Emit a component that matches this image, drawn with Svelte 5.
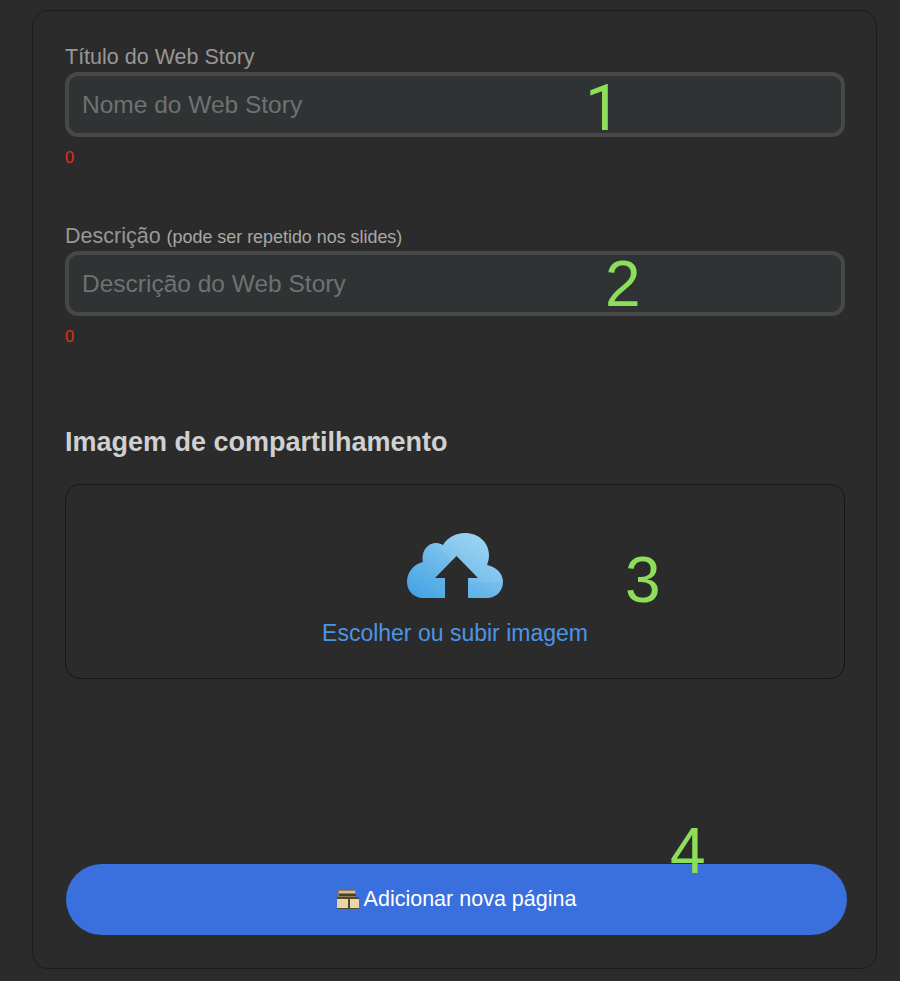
<script>
  let fields = [
    { label: 'Título do Web Story', hint: '', placeholder: 'Nome do Web Story', mark: '1' },
    { label: 'Descrição', hint: '(pode ser repetido nos slides)', placeholder: 'Descrição do Web Story', mark: '2' }
  ];
</script>

<div class="page">
  <div class="card">
    {#each fields as field, i}
      <div class="field">
        <label for={'f' + i}>{field.label}{#if field.hint}&nbsp;<small>{field.hint}</small>{/if}</label>
        <div class="inputWrap">
          <input id={'f' + i} type="text" placeholder={field.placeholder} />
          <span class="mark" class:markA={i === 0} class:markB={i === 1}>{field.mark}</span>
        </div>
        <div class="count">0</div>
      </div>
    {/each}

    <h2>Imagem de compartilhamento</h2>

    <div class="upload">
      <svg class="cloud" viewBox="0 0 96 65" width="96" height="65" aria-hidden="true">
        <defs>
          <linearGradient id="cloudFill" x1="0.1" y1="1" x2="0.9" y2="0">
            <stop offset="0" stop-color="#45a3e5" />
            <stop offset="1" stop-color="#9dd5f2" />
          </linearGradient>
        </defs>
        <path
          fill="url(#cloudFill)"
          d="M16 65 C7 65 0 58 0 49 C0 39 7 31 16 29 C14 19 20 10 29 10 C32 10 34 11 36 12 C40 5 48 0 58 0 C71 0 82 9 82 22 C82 26 81 29 80 32 C90 34 96 41 96 49 C96 58 89 65 80 65 Z"
        />
        <path fill="#fff" fill-opacity="0.08" d="M29 10 C32 10 34 11 36 12 C40 5 48 0 58 0 C71 0 82 9 82 22 C82 26 81 29 80 32 C90 34 96 41 96 49 L64 49 Z" />
        <path fill="#2b2b2b" d="M49.500 23 L28 45 L38 45 L38 65 L61 65 L61 45 L71 45 Z" />
      </svg>
      <span class="uploadText">Escolher ou subir imagem</span>
      <span class="mark markC">3</span>
    </div>

    <div class="actions">
      <button type="button">
        <svg viewBox="0 0 22 19" width="22" height="19" aria-hidden="true">
          <path fill="#8f7d57" d="M1 0 H19 V7 H1 Z" />
          <path fill="#d2c193" d="M2 1 H18 V3 H2 Z" />
          <path fill="#4b3d29" d="M2 4 H19 V6 H2 Z" />
          <path fill="#e6d6a8" d="M0 7 H22 V19 H0 Z" />
          <path fill="#55462f" d="M0 7 H22 V9 H0 Z M11 9 H13 V19 H11 Z M0 18 H22 V19 H0 Z" />
        </svg>
        <span>Adicionar nova página</span>
      </button>
      <span class="mark markD">4</span>
    </div>
  </div>
</div>

<style>
  :global(body) {
    background: #2b2b2b;
    font-family: "Liberation Sans", Arial, sans-serif;
  }

  .page {
    box-sizing: border-box;
    height: 981px;
    padding: 10px 23px 12px 32px;
  }

  .card {
    box-sizing: border-box;
    height: 959px;
    padding: 34px 31px 0 32px;
    border: 1px solid #1c1c1c;
    border-radius: 16px;
  }

  .field {
    height: 179px;
  }

  label {
    display: block;
    height: 27px;
    color: #979797;
    font-size: 21.5px;
    line-height: 24px;
  }

  small {
    font-size: 17.9px;
    color: #a8a8a8;
  }

  .inputWrap {
    position: relative;
  }

  input {
    box-sizing: border-box;
    display: block;
    width: 100%;
    height: 65px;
    padding: 0 13px;
    background: #2f3333;
    border: 4px solid #484848;
    border-radius: 13px;
    font-family: inherit;
    font-size: 24.5px;
    outline: none;
  }

  input::placeholder {
    color: #6f7173;
    opacity: 1;
  }

  .count {
    margin-top: 11px;
    color: #e0301e;
    font-size: 16.5px;
    line-height: 19px;
  }

  h2 {
    margin: 0;
    padding-top: 24px;
    color: #d0d0d0;
    font-size: 27px;
    line-height: 30px;
    font-weight: bold;
  }

  .upload {
    box-sizing: border-box;
    position: relative;
    height: 195px;
    margin-top: 27px;
    padding-top: 48px;
    display: flex;
    flex-direction: column;
    align-items: center;
    border: 1px solid #161616;
    border-radius: 15px;
  }

  .cloud {
    display: block;
  }

  .uploadText {
    margin-top: 22px;
    color: #4b94e6;
    font-size: 23px;
    line-height: 26px;
  }

  .actions {
    position: relative;
    margin-top: 185px;
  }

  button {
    width: 781px;
    height: 71px;
    margin-left: 1px;
    display: flex;
    align-items: center;
    justify-content: center;
    gap: 5px;
    padding: 0;
    border: none;
    border-radius: 36px;
    background: #3a6fde;
    color: #fff;
    font-family: inherit;
    font-size: 21.5px;
  }

  .mark {
    position: absolute;
    color: #8ede5a;
    font-size: 64px;
    line-height: 64px;
    pointer-events: none;
  }

  .markA {
    left: 520px;
    top: 5px;
    font-family: Roboto, sans-serif;
  }

  .markB {
    left: 540px;
    top: 1px;
  }

  .markC {
    left: 559px;
    top: 63px;
  }

  .markD {
    left: 605px;
    top: -45px;
  }
</style>
